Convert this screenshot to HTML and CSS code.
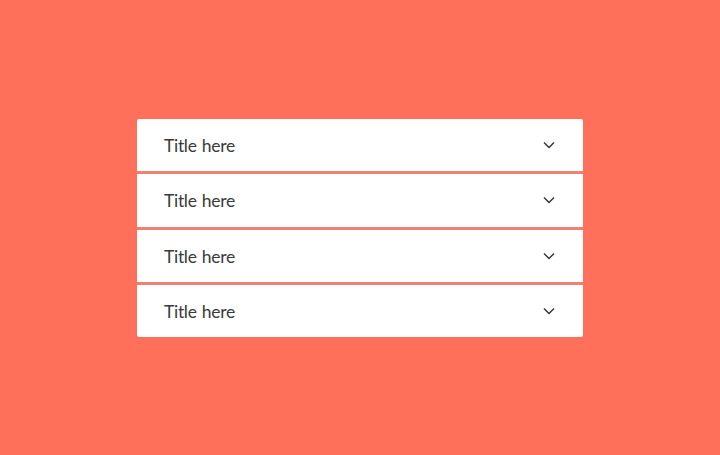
FILE: index.html
```html
<!DOCTYPE html>
<html>
<head>
<meta charset="utf-8">
<link rel="stylesheet" href="styles.css">
</head>
<body>
<div class="stage">
  <div class="accordion">
    <div class="item"><span class="title">Title here</span><svg class="chev" width="12" height="8" viewBox="0 0 12 8"><path d="M1 1.5 L6 6.5 L11 1.5" fill="none" stroke="#333" stroke-width="1.4"/></svg></div>
    <div class="item"><span class="title">Title here</span><svg class="chev" width="12" height="8" viewBox="0 0 12 8"><path d="M1 1.5 L6 6.5 L11 1.5" fill="none" stroke="#333" stroke-width="1.4"/></svg></div>
    <div class="item"><span class="title">Title here</span><svg class="chev" width="12" height="8" viewBox="0 0 12 8"><path d="M1 1.5 L6 6.5 L11 1.5" fill="none" stroke="#333" stroke-width="1.4"/></svg></div>
    <div class="item"><span class="title">Title here</span><svg class="chev" width="12" height="8" viewBox="0 0 12 8"><path d="M1 1.5 L6 6.5 L11 1.5" fill="none" stroke="#333" stroke-width="1.4"/></svg></div>
  </div>
</div>
</body>
</html>
```
FILE: styles.css
```css
html, body {
  margin: 0;
  padding: 0;
  background: #ff705a;
}
.stage {
  width: 720px;
  height: 455px;
  display: flex;
  justify-content: center;
  padding-top: 119px;
  box-sizing: border-box;
}
.accordion {
  width: 446px;
  background: #f27f6f;
  border-radius: 2px;
  display: flex;
  flex-direction: column;
  gap: 3px;
  height: 218px;
  overflow: hidden;
}
.item {
  flex: 1;
  background: #fff;
  display: flex;
  align-items: center;
  justify-content: space-between;
  padding: 0 28px 0 27px;
}
.title {
  font-family: Lato, "Liberation Sans", sans-serif;
  font-size: 17.5px;
  letter-spacing: -0.3px;
  word-spacing: 1px;
  color: #3a3a3a;
  margin-top: 1px;
}
.chev {
  display: block;
  margin-top: 0;
}
```
